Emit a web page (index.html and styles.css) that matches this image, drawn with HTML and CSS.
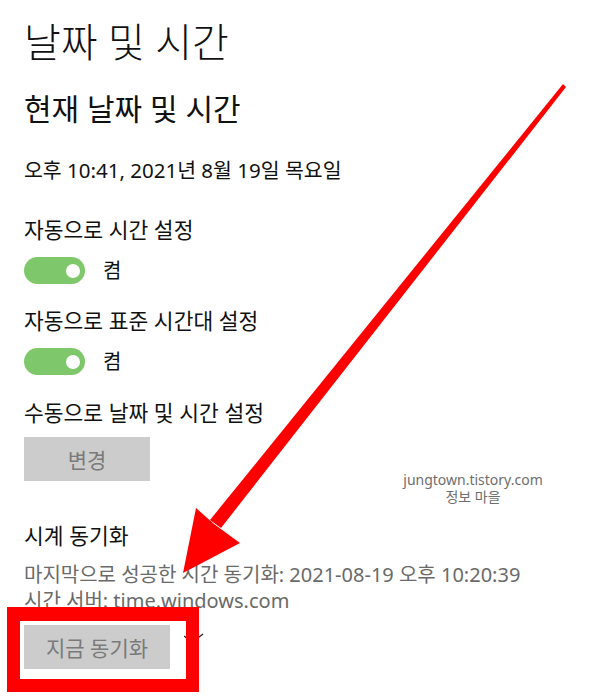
FILE: index.html
```html
<!DOCTYPE html>
<html lang="ko">

<head>
    <meta charset="UTF-8">
    <meta name="viewport" content="width=device-width, initial-scale=1.0">
    <title>날짜 및 시간</title>
    <link rel="stylesheet" href="styles.css">
</head>

<body>
    <div class="page">
        <h1 class="title">날짜 및 시간</h1>
        <h2 class="subtitle">현재 날짜 및 시간</h2>
        <p class="now">오후 10:41, 2021년 8월 19일 목요일</p>

        <div class="setting">
            <div class="label">자동으로 시간 설정</div>
            <div class="toggleRow">
                <span class="toggle"><span class="knob"></span></span>
                <span class="state">켬</span>
            </div>
        </div>

        <div class="setting">
            <div class="label">자동으로 표준 시간대 설정</div>
            <div class="toggleRow">
                <span class="toggle"><span class="knob"></span></span>
                <span class="state">켬</span>
            </div>
        </div>

        <div class="setting manual">
            <div class="label">수동으로 날짜 및 시간 설정</div>
            <button class="btn btnChange">변경</button>
        </div>

        <div class="sync">
            <div class="label">시계 동기화</div>
            <div class="info first">마지막으로 성공한 시간 동기화: 2021-08-19 오후 10:20:39</div>
            <div class="info">시간 서버: time.windows.com</div>
            <div class="syncRow">
                <button class="btn btnSync">지금 동기화</button>
                <svg class="chev" width="20" height="12" viewBox="0 0 20 12">
                    <path d="M0 3 L8 9.5 L19 1" fill="none" stroke="#222" stroke-width="1.3" />
                </svg>
            </div>
        </div>
    </div>

    <div class="mark">
        <div>jungtown.tistory.com</div>
        <div>정보 마을</div>
    </div>

    <!-- annotation overlay -->
    <div class="redBox"></div>
    <svg class="arrow" width="600" height="700" viewBox="0 0 600 700">
        <polygon points="563,84 566,87 221,528 210,520" fill="#ff0000" />
        <polygon points="183,573 196,508 214,524 240,543" fill="#ff0000" />
    </svg>
</body>

</html>
```

FILE: styles.css
```css
html {
    width: 100%;
    height: 100%;
}

body {
    margin: 0;
    background-color: #ffffff;
    font-family: "Noto Sans", "Noto Sans CJK KR", sans-serif;
    color: #111111;
    position: relative;
    height: 100%;
    overflow: hidden;
}

.page {
    padding-left: 24px;
}

.title {
    margin: 19px 0 0;
    font-size: 40px;
    line-height: 46px;
    font-weight: 300;
}

.subtitle {
    margin: 26px 0 0;
    font-size: 30px;
    line-height: 36px;
    font-weight: 400;
}

.now {
    margin: 30px 0 0;
    font-size: 20.5px;
    line-height: 26px;
}

.setting {
    margin-top: 34px;
}
.setting + .setting {
    margin-top: 24px;
}
.setting.manual {
    margin-top: 25px;
}

.label {
    font-size: 21.5px;
    line-height: 26px;
}

.toggleRow {
    display: flex;
    align-items: center;
    gap: 18px;
    margin-top: 14px;
}

.toggle {
    display: flex;
    align-items: center;
    justify-content: flex-end;
    width: 61px;
    height: 27px;
    border-radius: 14px;
    background-color: #7ec86b;
    padding-right: 5px;
    box-sizing: border-box;
}
.knob {
    width: 14px;
    height: 14px;
    border-radius: 50%;
    background-color: #ffffff;
}

.state {
    font-size: 20px;
    line-height: 26px;
}

.btn {
    display: block;
    border: none;
    background-color: #cccccc;
    color: #7a7a7a;
    font-family: inherit;
    font-size: 21px;
    height: 44px;
    padding: 0;
}
.btnChange {
    width: 126px;
    margin-top: 11px;
}

.sync {
    margin-top: 42px;
}
.info {
    color: #6a6a6a;
    font-size: 20px;
    line-height: 26px;
}
.info.first {
    margin-top: 13px;
}

.syncRow {
    display: flex;
    align-items: flex-start;
    gap: 14px;
    margin-top: 11px;
}
.btnSync {
    width: 146px;
}
.chev {
    margin-top: 8px;
}

.mark {
    position: absolute;
    left: 392px;
    top: 471px;
    width: 162px;
    text-align: center;
    font-size: 14px;
    line-height: 17px;
    color: #6e6e6e;
}

.redBox {
    position: absolute;
    left: 7px;
    top: 607px;
    width: 166px;
    height: 58px;
    border: 13px solid #ff0000;
    border-top-width: 14px;
}

.arrow {
    position: absolute;
    left: 0;
    top: 0;
    pointer-events: none;
}
```
